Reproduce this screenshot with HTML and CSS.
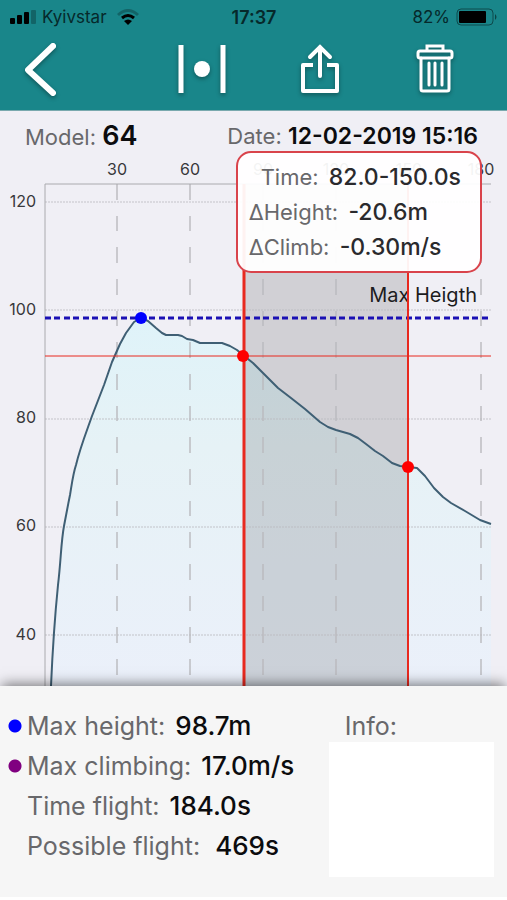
FILE: index.html
```html
<!DOCTYPE html>
<html lang="en">
<head>
    <meta charset="UTF-8">
    <meta name="viewport" content="width=device-width, initial-scale=1">
    <title>Flight 64</title>
    <link rel="stylesheet" href="styles.css">
</head>
<body>
    <header class="header">
        <div class="status">
            <div class="carrier">
                <svg width="26" height="14" viewBox="0 0 26 14">
                    <rect x="0" y="8" width="5" height="6" rx="1"/>
                    <rect x="7" y="5" width="5" height="9" rx="1"/>
                    <rect x="14" y="2" width="5" height="12" rx="1"/>
                    <rect x="21" y="0" width="5" height="14" rx="1" opacity=".25"/>
                </svg>
                <span>Kyivstar</span>
                <svg width="22" height="16" viewBox="0 0 22 16">
                    <path d="M1 6Q11 -3 21 6" fill="none" stroke="#000" stroke-width="3" opacity=".25"/>
                    <path d="M5 9Q11 4 17 9" fill="none" stroke="#000" stroke-width="3"/>
                    <path d="M7 12Q11 9 15 12L11 16Z"/>
                </svg>
            </div>
            <strong class="clock">17:37</strong>
            <div class="battery">
                <span>82%</span>
                <svg width="42" height="18" viewBox="0 0 42 18">
                    <rect x="1" y="1" width="36" height="16" rx="4" fill="none" stroke="#000" opacity=".45"/>
                    <rect x="3" y="3" width="27" height="12" rx="1"/>
                    <path d="M39 6Q42 9 39 12Z" opacity=".5"/>
                </svg>
            </div>
        </div>
        <nav class="toolbar">
            <button class="back" type="button" aria-label="Back">
                <svg width="36" height="60" viewBox="0 0 36 60">
                    <path d="M31 7L6 31L31 54" stroke-width="6" stroke-linecap="round" stroke-linejoin="round"/>
                </svg>
            </button>
            <div class="tools">
                <button type="button" aria-label="Markers">
                    <svg width="50" height="60" viewBox="0 0 50 60">
                        <path d="M4 6V54M46 6V54" stroke-width="5"/>
                        <circle cx="25" cy="30" r="8" class="solid"/>
                    </svg>
                </button>
                <button type="button" aria-label="Share">
                    <svg width="42" height="60" viewBox="0 0 42 60">
                        <path d="M14 26H4V52H38V26H28" stroke-width="4" stroke-linejoin="round"/>
                        <path d="M21 37V8M11 18L21 8L31 18" stroke-width="4" stroke-linecap="round"/>
                    </svg>
                </button>
                <button type="button" aria-label="Delete">
                    <svg width="42" height="60" viewBox="0 0 42 60">
                        <path d="M13 12V7H29V12" stroke-width="3"/>
                        <rect x="4" y="12" width="34" height="7" rx="2" stroke-width="3"/>
                        <path d="M7 19V50Q7 52 9 52H33Q35 52 35 50V19M15 24V46M21 24V46M28 24V46" stroke-width="3" stroke-linecap="round"/>
                    </svg>
                </button>
            </div>
        </nav>
    </header>

    <main class="flight">
        <div class="summary">
            <div class="model">Model: <strong>64</strong></div>
            <div class="date">Date: <strong>12-02-2019 15:16</strong></div>
        </div>
        <div class="chart">
            <svg class="plot" viewBox="0 0 507 536" role="img" aria-label="Height over time">
                <defs>
                    <linearGradient id="sky" x1="0" y1="0" x2="0" y2="1">
                        <stop offset="0" stop-color="#dff3f9"/>
                        <stop offset=".35" stop-color="#e6f2f6"/>
                        <stop offset="1" stop-color="#ebf0fa"/>
                    </linearGradient>
                </defs>
                <path fill="url(#sky)" d="M51 536C53 490 55 465 58 435C61 410 61 392 64 376C67 360 68 355 70 345C72 333 73 324 76 315C80 298 86 283 92 266L104 235L112 212L120 194L126 183L134 172L141 168L148 171L156 178L162 183L166 185H178L182 186L187 189L193 190L200 193H222L230 196L237 200L243 205L253 213L263 223L278 238L291 248L305 259L320 272L328 277L336 280L350 284L358 288L366 294L375 301L383 306L392 313L400 316L417 318L425 326L434 338L443 347L451 353L465 361L480 370L491 374V536Z"/>
                <!-- selected range -->
                <rect x="243" y="34" width="165" height="502" opacity=".13"/>
                <!-- grid -->
                <path class="level" d="M45 52H491M45 160H491M45 269H491M45 377H491M45 485H491"/>
                <path class="tick" d="M117 34V536M190 34V536M263 34V536M336 34V536M481 34V536"/>
                <path class="axis" d="M491 34H45V536"/>
                <path class="curve" d="M51 536C53 490 55 465 58 435C61 410 61 392 64 376C67 360 68 355 70 345C72 333 73 324 76 315C80 298 86 283 92 266L104 235L112 212L120 194L126 183L134 172L141 168L148 171L156 178L162 183L166 185H178L182 186L187 189L193 190L200 193H222L230 196L237 200L243 205L253 213L263 223L278 238L291 248L305 259L320 272L328 277L336 280L350 284L358 288L366 294L375 301L383 306L392 313L400 316L417 318L425 326L434 338L443 347L451 353L465 361L480 370L491 374"/>
                <path class="max" d="M45 168H491"/>
                <text class="max-label" x="477" y="152" text-anchor="end">Max Heigth</text>
                <path class="cursor" d="M45 206H491" stroke-width="1"/>
                <path class="cursor" d="M244 34V536" stroke-width="3"/>
                <path class="cursor" d="M408 34V536" stroke-width="2"/>
                <circle cx="141" cy="168" r="6" fill="#00f"/>
                <circle cx="243" cy="206" r="6" fill="#f00"/>
                <circle cx="408" cy="317" r="6" fill="#f00"/>
                <g class="labels" text-anchor="middle">
                    <text x="117" y="25">30</text>
                    <text x="190" y="25">60</text>
                    <text x="263" y="25">90</text>
                    <text x="336" y="25">120</text>
                    <text x="409" y="25">150</text>
                    <text x="481" y="25">180</text>
                </g>
                <g class="labels" text-anchor="end">
                    <text x="36" y="57">120</text>
                    <text x="36" y="165">100</text>
                    <text x="36" y="273">80</text>
                    <text x="36" y="381">60</text>
                    <text x="36" y="490">40</text>
                </g>
            </svg>
            <div class="popup">
                <p class="time">Time: <strong>82.0-150.0s</strong></p>
                <p>ΔHeight: <strong>-20.6m</strong></p>
                <p>ΔClimb: <strong>-0.30m/s</strong></p>
            </div>
        </div>
    </main>

    <footer class="details">
        <ul class="stats">
            <li class="height">Max height: <strong>98.7m</strong></li>
            <li class="climb">Max climbing: <strong>17.0m/s</strong></li>
            <li>Time flight: <strong>184.0s</strong></li>
            <li>Possible flight: <strong class="far">469s</strong></li>
        </ul>
        <div class="info">
            <label for="info">Info:</label>
            <textarea id="info"></textarea>
        </div>
    </footer>
</body>
</html>
```
FILE: styles.css
```css
* {
    box-sizing: border-box;
    margin: 0;
    padding: 0;
}
body {
    background: #fff;
    color: #68686b;
    font-family: Inter, "Liberation Sans", sans-serif;
}
strong {
    color: #0c0c0e;
    font-weight: 600;
}

/* header */
.header {
    height: 111px;
    background: #19868a;
    border-bottom: 1px solid #7aa9ae;
}
.status {
    display: grid;
    grid-template-columns: 1fr auto 1fr;
    align-items: center;
    height: 34px;
    padding: 0 9px 0 10px;
    color: #06292b;
    font-size: 17px;
}
.carrier,
.battery {
    display: flex;
    align-items: center;
    gap: 6px;
}
.carrier svg:last-child {
    margin-left: 4px;
}
.battery {
    justify-content: flex-end;
}
.clock {
    color: #06292b;
    font-size: 18px;
}
.toolbar {
    display: flex;
    height: 70px;
    padding-right: 15px;
}
.toolbar button {
    background: none;
    border: 0;
}
.toolbar svg {
    display: block;
    margin: 0 auto;
    fill: none;
    stroke: #fff;
    filter: drop-shadow(0 2px 2px rgba(0, 0, 0, .35));
}
.toolbar .solid {
    fill: #fff;
    stroke: none;
}
.back {
    width: 80px;
}
.tools {
    flex: 1;
    display: grid;
    grid-template-columns: 118fr 116fr 114fr;
    margin-left: 63px;
}

/* flight */
.flight {
    background: #f0eff5;
}
.summary {
    display: flex;
    justify-content: space-between;
    height: 39px;
    padding: 0 29px 0 25px;
    font-size: 22px;
    line-height: 50px;
    white-space: nowrap;
}
.model strong {
    font-size: 27px;
}
.date strong {
    font-size: 23px;
}
.chart {
    position: relative;
}
.plot {
    display: block;
    width: 100%;
    height: auto;
}
.plot path {
    stroke-linejoin: round;
}
.plot .level,
.plot .tick,
.plot .axis,
.plot .curve {
    fill: none;
    stroke: #b9b9be;
}
.plot .level {
    stroke-dasharray: 2 1;
    opacity: .8;
}
.plot .tick {
    stroke-dasharray: 16 16 15 16 16 16;
    stroke-width: 2;
    opacity: .7;
}
.plot .axis {
    stroke: #aaaaae;
}
.plot .curve {
    stroke: #3f5f74;
    stroke-width: 2;
}
.plot .max {
    stroke: #1a10b4;
    stroke-width: 3;
    stroke-dasharray: 6 3 6 4;
}
.plot .cursor {
    stroke: #e8291f;
}
.labels {
    fill: #38383b;
    font-size: 16px;
}
.max-label {
    fill: #1c1c1e;
    font-size: 20px;
}
.popup {
    position: absolute;
    top: 1px;
    right: 5%;
    width: 246px;
    height: 122px;
    padding: 7px 11px;
    background: rgba(255, 255, 255, .94);
    border: 2px solid #d9434b;
    border-radius: 15px;
    font-size: 22px;
    line-height: 35px;
    white-space: nowrap;
}
.popup strong {
    margin-left: 4px;
    color: #2a2a2d;
    font-size: 23px;
    font-weight: 500;
}
.popup .time {
    padding-left: 12px;
}

/* details */
.details {
    position: relative;
    display: flex;
    justify-content: space-between;
    padding: 20px 13px 20px 8px;
    background: #f6f6f6;
    box-shadow: 0 -4px 12px -2px rgba(0, 0, 0, .5);
    font-size: 25px;
    line-height: 40px;
}
.stats {
    list-style: none;
    white-space: nowrap;
}
.stats li {
    padding-left: 19px;
}
.stats strong {
    margin-left: 3px;
    font-size: 26px;
    font-weight: 500;
}
.stats .far {
    margin-left: 8px;
}
.height,
.climb {
    background: radial-gradient(circle at 7px 50%, #00f 6px, transparent 7px);
}
.climb {
    background: radial-gradient(circle at 7px 50%, #800080 6px, transparent 7px);
}
.info {
    display: flex;
    flex-direction: column;
    width: 34%;
}
.info label {
    height: 36px;
    padding-left: 16px;
}
.info textarea {
    width: 100%;
    height: 135px;
    background: #fff;
    border: 0;
    resize: none;
}
```
